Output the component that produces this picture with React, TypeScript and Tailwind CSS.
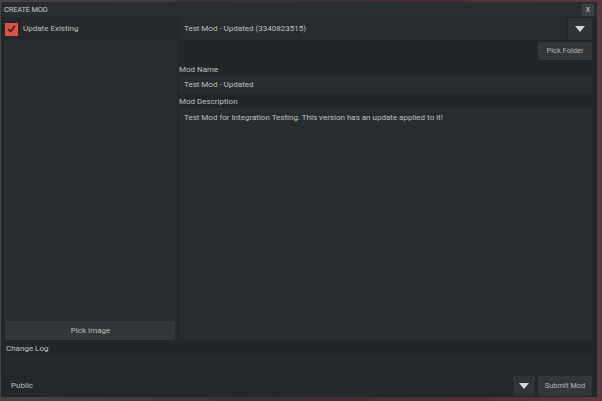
import React from "react";

const Arrow = () => (
  <svg width="10" height="6" viewBox="0 0 10 6">
    <path d="M0 0 L10 0 L5 6 Z" fill="#d4d4d4" />
  </svg>
);

export default function App() {
  return (
    <div
      className="w-[602px] h-[401px] overflow-hidden pt-[2px] pl-[1px] text-[#bfc1c2]"
      style={{
        fontFamily: "Roboto, 'Noto Sans', sans-serif",
        background:
          "linear-gradient(90deg, #4a4447 0%, #3b3237 40%, #4a3036 75%, #5a3a40 100%)",
      }}
    >
      <div className="w-[596px] h-[395px] bg-[#222628] flex flex-col">
        {/* title bar */}
        <div className="h-[15px] bg-[#2b2e30] flex items-center justify-between pl-[3px] pr-[3px]">
          <span className="text-[7.5px] text-[#c8cacb] tracking-tight">CREATE MOD</span>
          <div className="w-[12px] h-[12px] bg-[#3d4143] flex items-center justify-center text-[7px] text-[#d0d0d0] mt-[1px]">
            X
          </div>
        </div>

        <div className="flex-1 flex flex-col pl-[3px] pr-[5px] pt-[1px] pb-[1px]">
          <div className="flex flex-1 gap-[2px]">
            {/* left column */}
            <div className="w-[173px] flex flex-col">
              <div className="h-[22px] flex items-center gap-[5px] pl-[1px] bg-[#25292b]">
                <div className="w-[13px] h-[13px] bg-[#d9534a] rounded-[1px] flex items-center justify-center">
                  <svg width="9" height="8" viewBox="0 0 9 8">
                    <path d="M1 4 L3.5 6.5 L8 1" stroke="#3a1a18" strokeWidth="1.6" fill="none" />
                  </svg>
                </div>
                <span className="text-[8px]">Update Existing</span>
              </div>
              <div className="flex-1 bg-[#282c2f] flex flex-col justify-end px-[2px]">
                <div className="h-[19px] bg-[#33373a] flex items-center justify-center text-[8px] text-[#b9bbbc]">
                  Pick Image
                </div>
              </div>
            </div>

            {/* right column */}
            <div className="flex-1 flex flex-col">
              <div className="flex h-[22px] gap-[2px]">
                <div className="flex-1 bg-[#282c2e] flex items-center pl-[5px] text-[8px]">
                  Test Mod - Updated (3340823515)
                </div>
                <div className="w-[24px] bg-[#2f3335] flex items-center justify-center">
                  <Arrow />
                </div>
              </div>
              <div className="flex justify-end mt-[2px]">
                <div className="w-[54px] h-[18px] bg-[#33373a] flex items-center justify-center text-[7.5px] text-[#b3b5b6]">
                  Pick Folder
                </div>
              </div>
              <div className="text-[8px] mt-[5px] leading-[10px]">Mod Name</div>
              <div className="h-[18px] bg-[#282c2e] flex items-center pl-[5px] text-[8px] mt-[1px]">
                Test Mod - Updated
              </div>
              <div className="text-[8px] mt-[3px] leading-[10px]">Mod Description</div>
              <div className="flex-1 bg-[#282c2e] mt-[1px] pl-[5px] pt-[4px] text-[8px]">
                Test Mod for Integration Testing. This version has an update applied to it!
              </div>
            </div>
          </div>

          <div className="text-[8px] mt-[4px] leading-[10px] pl-[2px]">Change Log</div>
          <div className="h-[19px] bg-[#25292b] mt-[2px]"></div>
          <div className="flex h-[20px] gap-[2px] mt-[1px]">
            <div className="flex-1 bg-[#232729] flex items-center pl-[7px] text-[8px]">
              Public
            </div>
            <div className="w-[22px] bg-[#2f3335] flex items-center justify-center">
              <Arrow />
            </div>
            <div className="w-[54px] bg-[#33373a] flex items-center justify-center text-[7.5px] text-[#b3b5b6] ml-[1px]">
              Submit Mod
            </div>
          </div>
        </div>
      </div>
    </div>
  );
}
